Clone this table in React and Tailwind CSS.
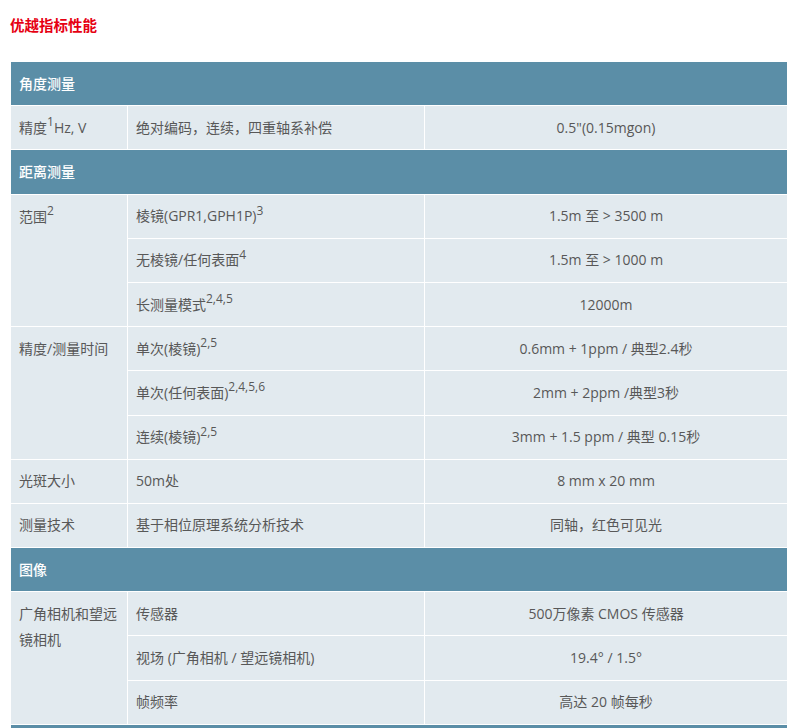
import React from 'react';

const HEAD = 'bg-[#5b8ea7] text-white font-medium text-left px-[8px] h-[44.2px] border border-white';
const CELL = 'bg-[#e2eaef] px-[8px] h-[44.2px] border border-white align-middle';
const TOP = 'bg-[#e2eaef] px-[8px] pt-[9px] border border-white align-top';

const Sup = ({ children }) => <sup className="text-[12px] -top-[0.55em]">{children}</sup>;

const Header = ({ children }) => (
    <tr>
        <td colSpan={3} className={HEAD}>{children}</td>
    </tr>
);

const App = () => {
    return (
        <div
            className="min-h-screen bg-white px-[10px] pt-[16px] text-[#585858]"
            style={{ fontFamily: '"Open Sans", "Noto Sans CJK SC", sans-serif' }}
        >
            <h2 className="text-[14.5px] leading-[20px] font-bold text-[#e60012]">优越指标性能</h2>

            <table className="mt-[25px] w-[777px] table-fixed border-collapse text-[14px] leading-[26px]">
                <colgroup>
                    <col className="w-[117px]" />
                    <col className="w-[297px]" />
                    <col className="w-[363px]" />
                </colgroup>
                <tbody>
                    <Header>角度测量</Header>
                    <tr>
                        <td className={CELL}>精度<Sup>1</Sup>Hz, V</td>
                        <td className={CELL}>绝对编码，连续，四重轴系补偿</td>
                        <td className={`${CELL} text-center`}>0.5"(0.15mgon)</td>
                    </tr>

                    <Header>距离测量</Header>
                    <tr>
                        <td rowSpan={3} className={TOP}>范围<Sup>2</Sup></td>
                        <td className={CELL}>棱镜(GPR1,GPH1P)<Sup>3</Sup></td>
                        <td className={`${CELL} text-center`}>1.5m 至 &gt; 3500 m</td>
                    </tr>
                    <tr>
                        <td className={CELL}>无棱镜/任何表面<Sup>4</Sup></td>
                        <td className={`${CELL} text-center`}>1.5m 至 &gt; 1000 m</td>
                    </tr>
                    <tr>
                        <td className={CELL}>长测量模式<Sup>2,4,5</Sup></td>
                        <td className={`${CELL} text-center`}>12000m</td>
                    </tr>
                    <tr>
                        <td rowSpan={3} className={TOP}>精度/测量时间</td>
                        <td className={CELL}>单次(棱镜)<Sup>2,5</Sup></td>
                        <td className={`${CELL} text-center`}>0.6mm + 1ppm / 典型2.4秒</td>
                    </tr>
                    <tr>
                        <td className={CELL}>单次(任何表面)<Sup>2,4,5,6</Sup></td>
                        <td className={`${CELL} text-center`}>2mm + 2ppm /典型3秒</td>
                    </tr>
                    <tr>
                        <td className={CELL}>连续(棱镜)<Sup>2,5</Sup></td>
                        <td className={`${CELL} text-center`}>3mm + 1.5 ppm / 典型 0.15秒</td>
                    </tr>
                    <tr>
                        <td className={CELL}>光斑大小</td>
                        <td className={CELL}>50m处</td>
                        <td className={`${CELL} text-center`}>8 mm x 20 mm</td>
                    </tr>
                    <tr>
                        <td className={CELL}>测量技术</td>
                        <td className={CELL}>基于相位原理系统分析技术</td>
                        <td className={`${CELL} text-center`}>同轴，红色可见光</td>
                    </tr>

                    <Header>图像</Header>
                    <tr>
                        <td rowSpan={3} className={TOP}>广角相机和望远镜相机</td>
                        <td className={CELL}>传感器</td>
                        <td className={`${CELL} text-center`}>500万像素 CMOS 传感器</td>
                    </tr>
                    <tr>
                        <td className={CELL}>视场 (广角相机 / 望远镜相机)</td>
                        <td className={`${CELL} text-center`}>19.4° / 1.5°</td>
                    </tr>
                    <tr>
                        <td className={CELL}>帧频率</td>
                        <td className={`${CELL} text-center`}>高达 20 帧每秒</td>
                    </tr>

                    <Header />
                </tbody>
            </table>
        </div>
    );
};

export default App;
